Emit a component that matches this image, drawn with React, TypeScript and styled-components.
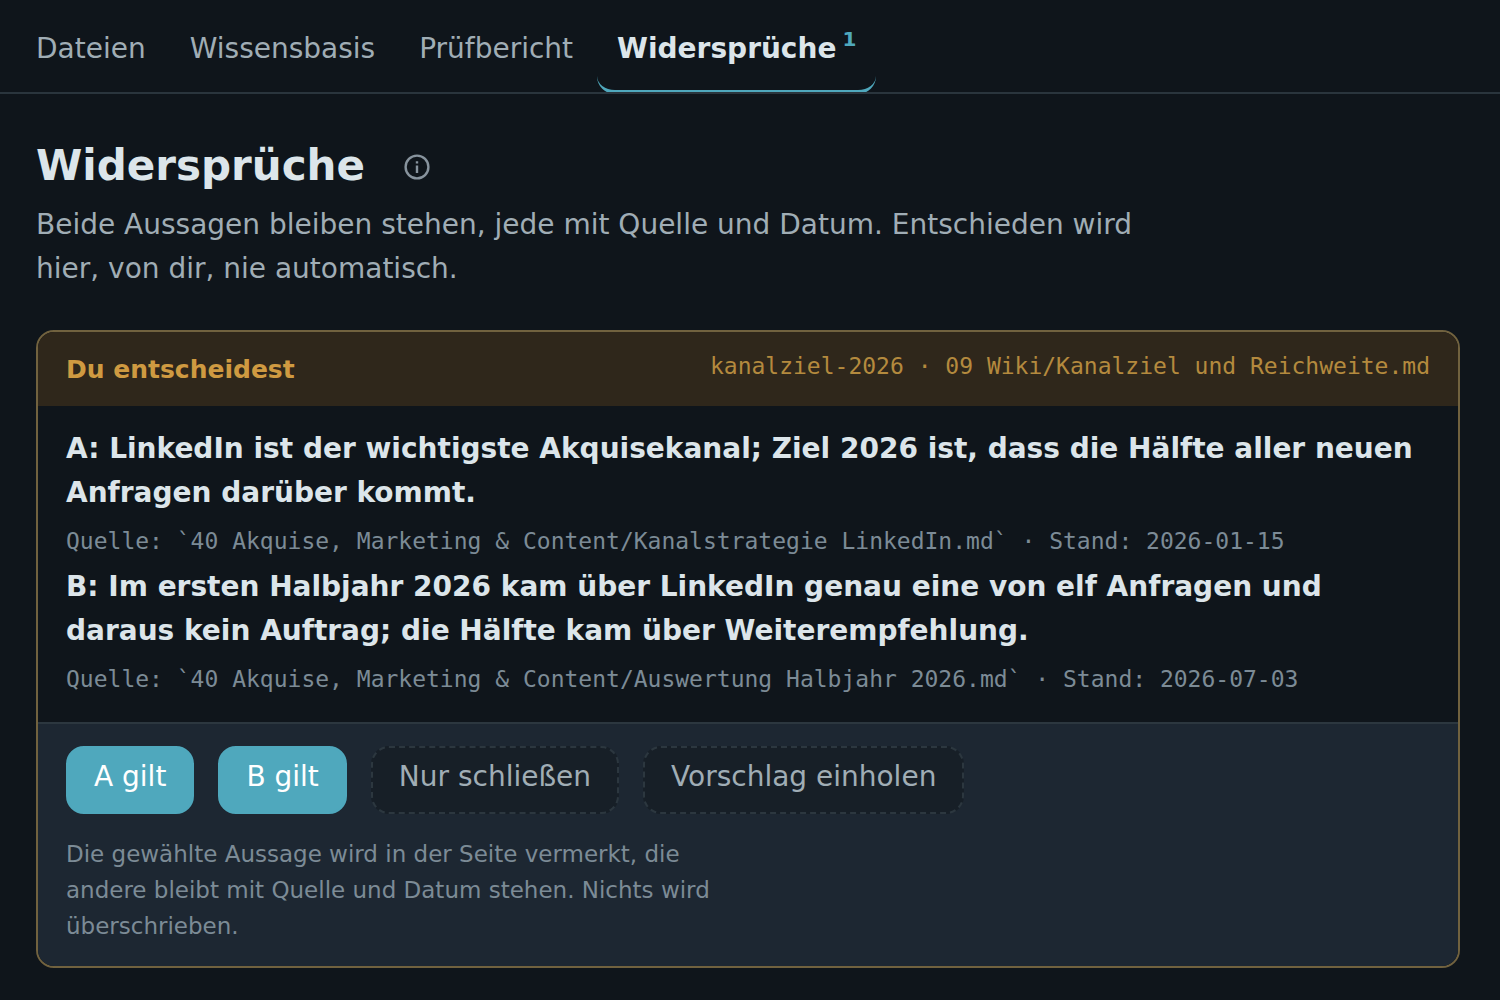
import React from "react";
import styled, { createGlobalStyle } from "styled-components";

const sans = `"DejaVu Sans", sans-serif`;
const mono = `"DejaVu Sans Mono", monospace`;

const GlobalStyle = createGlobalStyle`
  * { box-sizing: border-box; }
  body { margin: 0; background: #0f151b; color: #dce5ea; font-family: ${sans}; font-size: 28px; line-height: 44px; }
  p, h1, h2 { margin: 0; }
  button { font: inherit; cursor: pointer; }
`;

const Tabs = styled.nav`
  display: flex;
  height: 94px;
  padding: 4px 16px 0;
  border-bottom: 2px solid #2a353d;
  overflow: hidden;
`;

const Tab = styled.button<{ $active?: boolean }>`
  display: flex;
  align-items: flex-start;
  gap: 6px;
  padding: 23px 20px 0;
  margin: 0 4px -2px 0;
  border: 0;
  border-bottom: 4px solid ${(p) => (p.$active ? "#4fa8bd" : "transparent")};
  border-radius: 0 0 18px 18px;
  background: transparent;
  color: ${(p) => (p.$active ? "#dce5ea" : "#a0adb5")};
  font-weight: ${(p) => (p.$active ? 700 : 400)};
`;

const Count = styled.span`
  color: #4fa8bd;
  font-size: 20px;
  line-height: 24px;
`;

const Page = styled.main`
  padding: 44px 40px 32px 36px;
`;

const TitleRow = styled.div`
  display: flex;
  align-items: center;
  gap: 38px;
`;

const Title = styled.h1`
  font-size: 42px;
  line-height: 56px;
`;

const InfoButton = styled.button`
  display: flex;
  padding: 2px 0 0;
  border: 0;
  background: transparent;
  color: #87939d;
`;

const Intro = styled.p`
  max-width: 1120px;
  margin-top: 9px;
  color: #a0adb5;
`;

const Card = styled.section`
  margin-top: 39px;
  border: 2px solid #71623f;
  border-radius: 18px;
  overflow: hidden;
`;

const CardHeader = styled.header`
  display: flex;
  justify-content: space-between;
  padding: 12px 28px 18px;
  background: #2f271b;
  color: #cf9a41;
`;

const CardTitle = styled.h2`
  padding-top: 4px;
  font-size: 25px;
  line-height: 44px;
  height: 44px;
`;

const Path = styled.span`
  color: #b48a3e;
  font-family: ${mono};
  font-size: 23px;
`;

const Statements = styled.div`
  padding: 21px 28px 19px;
`;

const Statement = styled.p`
  font-weight: 700;
`;

const Source = styled.p`
  padding: 6px 0 4px;
  color: #7c8b96;
  font-family: ${mono};
  font-size: 23px;
  line-height: 40px;
`;

const CardFooter = styled.footer`
  padding: 22px 28px;
  border-top: 2px solid #2c373f;
  background: #1d2732;
`;

const Actions = styled.div`
  display: flex;
  flex-wrap: wrap;
  gap: 24px;
`;

const Action = styled.button<{ $primary?: boolean }>`
  padding: 7px 26px 13px;
  border: 2px ${(p) => (p.$primary ? "solid #4fa8bd" : "dashed #2c373f")};
  border-radius: 18px;
  background: ${(p) => (p.$primary ? "#4fa8bd" : "#171f27")};
  color: ${(p) => (p.$primary ? "#ffffff" : "#a0adb5")};
`;

const Hint = styled.p`
  max-width: 680px;
  margin-top: 22px;
  color: #7c8b96;
  font-size: 23px;
  line-height: 36px;
`;

const tabs = ["Dateien", "Wissensbasis", "Prüfbericht"];

export default function App() {
  return (
    <>
      <GlobalStyle />
      <Tabs>
        {tabs.map((label) => (
          <Tab key={label}>{label}</Tab>
        ))}
        <Tab $active aria-current="page">
          Widersprüche<Count>1</Count>
        </Tab>
      </Tabs>
      <Page>
        <TitleRow>
          <Title>Widersprüche</Title>
          <InfoButton aria-label="Info">
            <svg width="28" height="28" viewBox="0 0 28 28" fill="none" stroke="currentColor" strokeWidth="2.4">
              <circle cx="14" cy="14" r="11.4" />
              <path d="M14 12.5v7.5M14 8.2v2.2" />
            </svg>
          </InfoButton>
        </TitleRow>
        <Intro>
          Beide Aussagen bleiben stehen, jede mit Quelle und Datum. Entschieden wird hier, von dir, nie automatisch.
        </Intro>
        <Card>
          <CardHeader>
            <CardTitle>Du entscheidest</CardTitle>
            <Path>kanalziel-2026 · 09 Wiki/Kanalziel und Reichweite.md</Path>
          </CardHeader>
          <Statements>
            <Statement>
              A: LinkedIn ist der wichtigste Akquisekanal; Ziel 2026 ist, dass die Hälfte aller neuen Anfragen darüber kommt.
            </Statement>
            <Source>Quelle: `40 Akquise, Marketing &amp; Content/Kanalstrategie LinkedIn.md` · Stand: 2026-01-15</Source>
            <Statement>
              B: Im ersten Halbjahr 2026 kam über LinkedIn genau eine von elf Anfragen und daraus kein Auftrag; die Hälfte kam über Weiterempfehlung.
            </Statement>
            <Source>Quelle: `40 Akquise, Marketing &amp; Content/Auswertung Halbjahr 2026.md` · Stand: 2026-07-03</Source>
          </Statements>
          <CardFooter>
            <Actions>
              <Action $primary>A gilt</Action>
              <Action $primary>B gilt</Action>
              <Action>Nur schließen</Action>
              <Action>Vorschlag einholen</Action>
            </Actions>
            <Hint>
              Die gewählte Aussage wird in der Seite vermerkt, die andere bleibt mit Quelle und Datum stehen. Nichts wird überschrieben.
            </Hint>
          </CardFooter>
        </Card>
      </Page>
    </>
  );
}
